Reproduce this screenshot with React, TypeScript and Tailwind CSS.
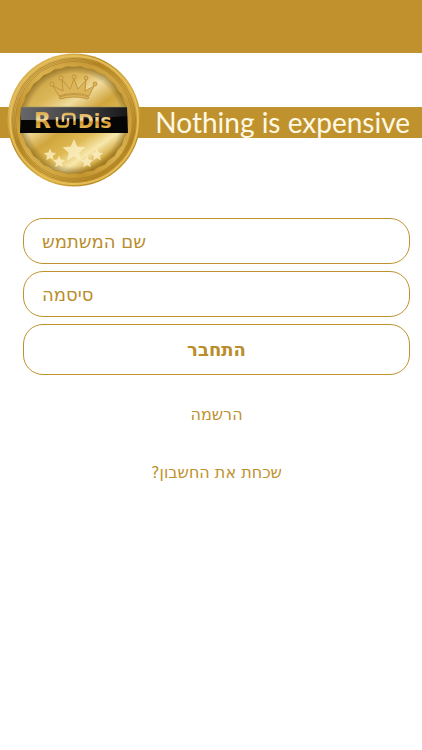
import React from 'react';

const starPoints = (cx: number, cy: number, r: number) =>
  Array.from({ length: 10 }, (_, i) => {
    const radius = i % 2 === 0 ? r : r * 0.46;
    const angle = (Math.PI / 5) * i - Math.PI / 2;
    return `${(cx + radius * Math.cos(angle)).toFixed(2)},${(cy + radius * Math.sin(angle)).toFixed(2)}`;
  }).join(' ');

// scalloped edge between the rim and the coin face
const scallopPath = (cx: number, cy: number, r: number, count: number) => {
  const point = (i: number) => {
    const a = (Math.PI * 2 * i) / count;
    return `${(cx + r * Math.cos(a)).toFixed(2)} ${(cy + r * Math.sin(a)).toFixed(2)}`;
  };
  let d = `M${point(0)}`;
  for (let i = 1; i <= count; i++) {
    d += ` A30 30 0 0 0 ${point(i)}`;
  }
  return `${d}Z`;
};

const STARS = [
  { x: 67, y: 98, r: 12 },
  { x: 43, y: 102, r: 6.5 },
  { x: 52, y: 109, r: 6.5 },
  { x: 80, y: 109, r: 6.5 },
  { x: 90, y: 102, r: 6.5 },
];

const CROWN_BALLS = [
  [45, 31],
  [54, 25],
  [67, 24],
  [79, 25],
  [88, 31],
];

const Medal: React.FC = () => (
  <svg viewBox="0 0 134 134" className="w-[134px] h-[134px]" role="img" aria-label="Roodis">
    <defs>
      <linearGradient id="rim" x1="0" y1="0" x2="1" y2="1">
        <stop offset="0" stopColor="#c79a35" />
        <stop offset="0.2" stopColor="#dcb455" />
        <stop offset="0.38" stopColor="#bd8c27" />
        <stop offset="0.6" stopColor="#d9ae43" />
        <stop offset="0.8" stopColor="#bd8c25" />
        <stop offset="1" stopColor="#dcae3c" />
      </linearGradient>
      <linearGradient id="ring" x1="0" y1="1" x2="1" y2="0">
        <stop offset="0" stopColor="#e9c765" />
        <stop offset="0.3" stopColor="#c4952f" />
        <stop offset="0.55" stopColor="#dab24e" />
        <stop offset="0.8" stopColor="#c99c39" />
        <stop offset="1" stopColor="#e8c768" />
      </linearGradient>
      <linearGradient id="face" x1="0.15" y1="0" x2="0.85" y2="1">
        <stop offset="0" stopColor="#c49a3d" />
        <stop offset="0.25" stopColor="#dcb758" />
        <stop offset="0.38" stopColor="#f0dc9e" />
        <stop offset="0.52" stopColor="#d0a53d" />
        <stop offset="0.66" stopColor="#dfba54" />
        <stop offset="0.77" stopColor="#f7e8ac" />
        <stop offset="0.88" stopColor="#cfa236" />
        <stop offset="1" stopColor="#b18422" />
      </linearGradient>
      <radialGradient id="shade">
        <stop offset="0.86" stopColor="#5c430c" stopOpacity="0" />
        <stop offset="1" stopColor="#5c430c" stopOpacity="0.45" />
      </radialGradient>
      <linearGradient id="plate" x1="0" y1="0" x2="1" y2="0">
        <stop offset="0" stopColor="#67676a" />
        <stop offset="0.5" stopColor="#454548" />
        <stop offset="1" stopColor="#19191b" />
      </linearGradient>
      <linearGradient id="letters" gradientUnits="userSpaceOnUse" x1="0" y1="59" x2="0" y2="76">
        <stop offset="0" stopColor="#dba846" />
        <stop offset="0.45" stopColor="#f3d99b" />
        <stop offset="0.6" stopColor="#cf942a" />
        <stop offset="1" stopColor="#e9bd55" />
      </linearGradient>
    </defs>

    <circle cx="67" cy="67" r="66.5" fill="url(#rim)" />
    <circle cx="67" cy="67" r="64" fill="none" stroke="#e3bd58" strokeWidth="2" />
    <circle cx="67" cy="67" r="61.5" fill="none" stroke="#9c7220" strokeWidth="0.6" />
    <circle cx="67" cy="67" r="60" fill="none" stroke="#9c7220" strokeWidth="0.5" />
    <circle cx="67" cy="67" r="58.5" fill="url(#ring)" stroke="#9c7220" strokeWidth="0.5" />
    <path d={scallopPath(67, 67, 54, 26)} fill="url(#face)" />
    <path d={scallopPath(67, 67, 54, 26)} fill="url(#shade)" stroke="#a67b23" strokeWidth="0.5" />

    <g fill="#dcb45a" stroke="#b98a34" strokeWidth="0.8" strokeLinejoin="round">
      <path d="M52 43 L46 33 L56 38 L55 27 L63 36 L67 26 L71 36 L79 27 L78 38 L87 33 L82 43 Q67 38 52 43Z" />
      <path d="M52 44 Q67 39 82 44 L81 46 Q67 42 53 46Z" />
      {CROWN_BALLS.map(([x, y]) => (
        <circle key={x} cx={x} cy={y} r="2" />
      ))}
    </g>

    <path d="M14 54 H120 L121 80 H13Z" fill="#060606" />
    <path d="M14 54 H120 L120 63 Q90 65 67 66 T14 67Z" fill="url(#plate)" />
    <path d="M14 54 H120" stroke="#9c906d" strokeWidth="0.6" />

    <g fill="url(#letters)" fontFamily="DejaVu Sans">
      <text x="27" y="75" fontSize="22" fontWeight="700">R</text>
      <text x="71" y="75" fontSize="19" fontWeight="700">Dis</text>
    </g>
    {/* two interlocking links between the letters */}
    <g fill="none" stroke="url(#letters)" strokeWidth="2.4">
      <path d="M50 64 V70 Q50 73.5 53 73.5 H58 Q61 73.5 61 70 V65" />
      <path d="M56 69 V64 Q56 61 59 61 H64 Q67.500 61 67.500 64 V72" />
    </g>

    {STARS.map((s) => (
      <polygon key={`${s.x}-${s.y}`} points={starPoints(s.x, s.y, s.r)} fill="#faedbe" fillOpacity="0.85" />
    ))}
  </svg>
);

const fieldClass =
  'w-full h-[46px] px-[18px] rounded-[20px] border border-[#c0922e] bg-white text-left text-lg text-[#b98d2b] placeholder:text-[#b98d2b] placeholder:opacity-100 outline-none';

const App: React.FC = () => {
  return (
    <div className="min-h-screen bg-white font-['DejaVu_Sans',sans-serif] text-[#c0922e]">
      <div className="h-[53px] bg-[#c0912d]" />

      <header className="relative pt-[54px]">
        <div className="flex h-[31px] items-center justify-end bg-[#c0922d] pr-3">
          <h1 className="font-['Lato',sans-serif] text-[28px] leading-[31px] text-[#fff8e4] whitespace-nowrap">
            Nothing is expensive
          </h1>
        </div>
        <div className="absolute left-[7px] top-0">
          <Medal />
        </div>
      </header>

      <main className="pl-[23px] pr-3 pt-20">
        <form className="flex flex-col gap-[7px]" onSubmit={(e) => e.preventDefault()}>
          <input type="text" dir="rtl" aria-label="שם המשתמש" placeholder="שם המשתמש" className={fieldClass} />
          <input type="password" dir="rtl" aria-label="סיסמה" placeholder="סיסמה" className={fieldClass} />
          <button
            type="submit"
            className="w-full h-[51px] rounded-[20px] border border-[#c0922e] text-lg font-bold text-[#b98d2b]"
          >
            התחבר
          </button>
        </form>

        <nav dir="rtl" className="mt-7 flex flex-col items-center gap-[34px] text-base leading-6">
          <a href="#register">הרשמה</a>
          <a href="#forgot">שכחת את החשבון?</a>
        </nav>
      </main>
    </div>
  );
};

export default App;
